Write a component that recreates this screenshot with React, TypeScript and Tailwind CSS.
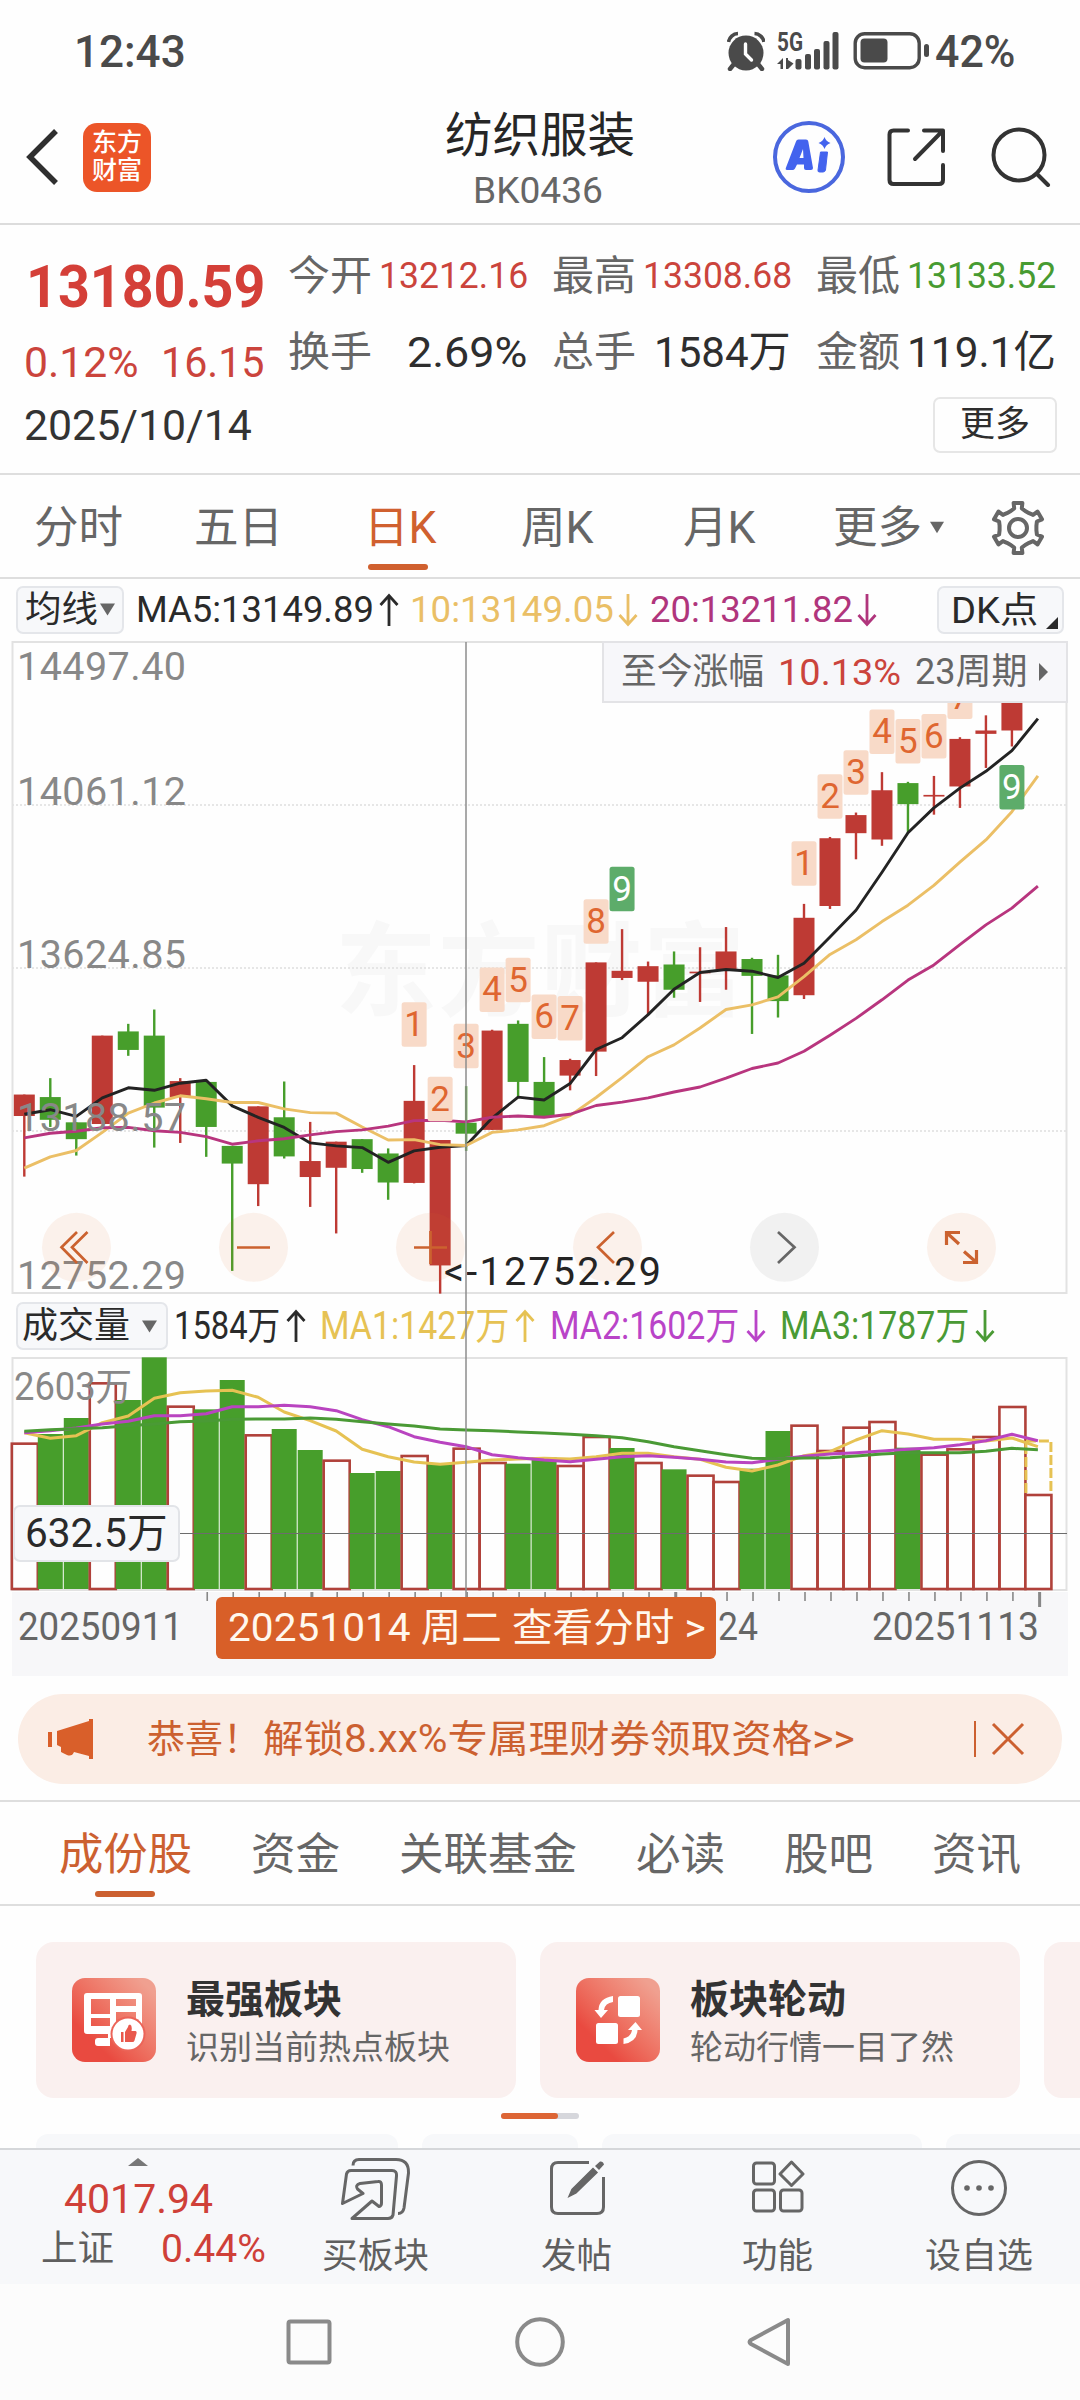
import React, { useLayoutEffect, useRef, useState } from "react";

/* Text squeezed or stretched horizontally to fill the width given by its class. */
function Fit({ className = "", children }: { className?: string; children: React.ReactNode }) {
  const outer = useRef<HTMLSpanElement>(null);
  const inner = useRef<HTMLSpanElement>(null);
  const [k, setK] = useState(1);
  useLayoutEffect(() => {
    if (outer.current && inner.current && inner.current.offsetWidth > 0) {
      setK(outer.current.clientWidth / inner.current.offsetWidth);
    }
  }, []);
  return (
    <span ref={outer} className={"block shrink-0 whitespace-nowrap leading-none " + className}>
      <span ref={inner} className="inline-block origin-left" style={{ transform: `scaleX(${k})` }}>
        {children}
      </span>
    </span>
  );
}

function Down({ className = "" }: { className?: string }) {
  return (
    <svg viewBox="0 0 16 13" className={"shrink-0 " + className}>
      <polygon points="0,0 16,0 8,13" fill="#666" />
    </svg>
  );
}

function Arrow({ up = false, className = "" }: { up?: boolean; className?: string }) {
  return (
    <svg viewBox="0 0 20 34" className={"h-[34px] w-[20px] shrink-0 " + className} fill="none" stroke="currentColor" strokeWidth="2.8">
      {up ? <path d="M10 33V3M1.5 12L10 2.5L18.5 12" /> : <path d="M10 1V31M1.5 22L10 31.5L18.5 22" />}
    </svg>
  );
}

/* ---------- status bar and header ---------- */

function StatusBar() {
  return (
    <div className="flex h-[102px] items-center text-[#4a4a4a]">
      <Fit className="ml-[74px] mt-[1px] w-[112px] text-[44px] font-medium">12:43</Fit>
      <svg viewBox="0 0 38 40" className="ml-[541px] h-[40px] w-[38px] shrink-0">
        <circle cx="19" cy="22" r="17.5" fill="#4a4a4a" />
        <path d="M1.5 11A10 10 0 0 1 11 2.5M37 11A10 10 0 0 0 27.500 2.5" stroke="#4a4a4a" strokeWidth="3.6" fill="none" />
        <path d="M7 33L3 38M31 33L35 38" stroke="#4a4a4a" strokeWidth="4.500" strokeLinecap="round" />
        <path d="M18.500 13V23L24.500 29" stroke="#fff" strokeWidth="3.4" fill="none" strokeLinecap="round" />
      </svg>
      <svg viewBox="0 0 64 40" className="ml-[12px] h-[40px] w-[64px] shrink-0 overflow-visible" fill="#4a4a4a">
        <text x="0" y="19.500" fontSize="25" fontWeight="700" textLength="26" lengthAdjust="spacingAndGlyphs">5G</text>
        <path d="M0 33L6 27V38H3.500V33ZM9 27H11V29L16.500 32.500L11 38H9Z" />
        <rect x="18.500" y="28" width="6" height="10.500" rx="2" />
        <rect x="28" y="23" width="6" height="15.500" rx="2" />
        <rect x="37" y="18" width="6" height="20.500" rx="2" />
        <rect x="46.500" y="10" width="6" height="28.500" rx="2" />
        <rect x="55.500" y="1" width="6" height="37.500" rx="2" />
      </svg>
      <svg viewBox="0 0 77 40" className="ml-[12px] h-[40px] w-[77px] shrink-0">
        <rect x="2.200" y="2.700" width="64" height="34" rx="9.500" fill="none" stroke="#4a4a4a" strokeWidth="3.400" />
        <rect x="7.500" y="7.500" width="27" height="24" rx="4" fill="#4a4a4a" />
        <rect x="71" y="13" width="5" height="13" rx="2.500" fill="#4a4a4a" />
      </svg>
      <Fit className="ml-[5px] mt-[1px] w-[80px] text-[44px] font-medium">42%</Fit>
    </div>
  );
}

function Header() {
  return (
    <div className="flex h-[123px] border-b-2 border-[#dcdcdc]">
      <div className="flex h-[110px] items-center">
        <svg viewBox="0 0 36 60" className="ml-[24px] h-[60px] w-[36px]" fill="none" stroke="#2f2f2f" strokeWidth="5.5">
          <path d="M32 4L6 30L32 56" />
        </svg>
        <div className="ml-[23px] flex h-[69px] w-[68px] flex-col items-center justify-center rounded-[14px] bg-[#ec5528] text-[25px] font-medium leading-[28px] text-white">
          <span>东方</span>
          <span>财富</span>
        </div>
      </div>
      <div className="ml-[289px] flex w-[200px] flex-col items-center pt-[10px]">
        <Fit className="w-[190px] text-[48px] text-[#262626]">纺织服装</Fit>
        <Fit className="mr-[5px] mt-[13px] w-[130px] text-[36px] text-[#666]">BK0436</Fit>
      </div>
      <div className="ml-[132px] flex h-[110px] items-center">
        <svg viewBox="0 0 74 74" className="h-[74px] w-[74px]">
          <circle cx="37" cy="37" r="34" fill="none" stroke="#4a67de" strokeWidth="4" />
          <path fillRule="evenodd" d="M24 21.500Q24.500 19.500 26.500 19.500H34Q36 19.500 36.300 21.500L41 48Q41 50 39 50H34Q32 50 32 48V44.500H25L23 48.500Q22 50 20.500 50H15Q13 50 14 47.500ZM27.500 38H31.500L31 29Z" fill="#4363ee" />
          <path d="M48.500 32H55.500L53.500 50Q53 52 51 52H47.500Q45.500 52 46 50Z" fill="#4363ee" stroke="#4363ee" strokeLinejoin="round" />
          <path d="M52.500 17Q54 21.500 58.500 23Q54 24.500 52.500 29Q51 24.500 46.500 23Q51 21.500 52.500 17Z" fill="#4363ee" />
        </svg>
        <svg viewBox="0 0 60 60" className="ml-[40px] h-[60px] w-[60px]" fill="none" stroke="#333" strokeWidth="4" strokeLinecap="round" strokeLinejoin="round">
          <path d="M22 3.500H7.500Q3.500 3.500 3.500 7.500V53Q3.500 57 7.500 57H53Q57 57 57 53V38" />
          <path d="M38 3.500H57V24M56 4.500L29 32" />
        </svg>
        <svg viewBox="0 0 60 60" className="ml-[45px] h-[60px] w-[60px]" fill="none" stroke="#333" strokeWidth="4" strokeLinecap="round">
          <circle cx="28" cy="28" r="25.500" />
          <path d="M46 47L57 58" />
        </svg>
      </div>
    </div>
  );
}

/* ---------- quote summary ---------- */

function Quote() {
  return (
    <div className="h-[248px]">
      <div className="flex h-[152px]">
        <div className="flex flex-col">
          <div className="flex h-[121px] items-center">
            <Fit className="ml-[26px] mt-[2px] w-[239px] text-[60px] font-bold text-[#d43f38]">13180.59</Fit>
          </div>
          <div className="flex h-[31px] items-center text-[42px] text-[#cb443c]">
            <Fit className="ml-[24px] mt-[2px] w-[115px]">0.12%</Fit>
            <Fit className="ml-[22px] mt-[2px] w-[104px]">16.15</Fit>
          </div>
        </div>
        <div className="flex flex-col text-[41px] text-[#666]">
          <div className="flex h-[102px] items-center">
            <Fit className="ml-[23px] w-[84px]">今开</Fit>
            <Fit className="ml-[7px] w-[149px] text-[36px] text-[#cb443c]">13212.16</Fit>
            <Fit className="ml-[24px] w-[84px]">最高</Fit>
            <Fit className="ml-[7px] w-[149px] text-[36px] text-[#cb443c]">13308.68</Fit>
            <Fit className="ml-[24px] w-[84px]">最低</Fit>
            <Fit className="ml-[7px] w-[149px] text-[36px] text-[#479b31]">13133.52</Fit>
          </div>
          <div className="flex h-[50px] items-center">
            <Fit className="ml-[23px] w-[84px]">换手</Fit>
            <Fit className="ml-[35px] w-[120px] text-[43px] text-[#2e2e2e]">2.69%</Fit>
            <Fit className="ml-[25px] w-[84px]">总手</Fit>
            <Fit className="ml-[18px] w-[137px] text-[43px] text-[#2e2e2e]">1584万</Fit>
            <Fit className="ml-[25px] w-[84px]">金额</Fit>
            <Fit className="ml-[7px] w-[149px] text-[43px] text-[#2e2e2e]">119.1亿</Fit>
          </div>
        </div>
      </div>
      <div className="flex h-[96px] items-center justify-between pl-[24px] pr-[23px]">
        <Fit className="mt-[1px] w-[228px] text-[43px] text-[#333]">2025/10/14</Fit>
        <div className="flex h-[56px] w-[124px] items-center justify-center rounded-[7px] border-2 border-[#e6e6e6] text-[35px] text-[#2e2e2e]">更多</div>
      </div>
    </div>
  );
}

/* ---------- period tabs ---------- */

const gearPoints = Array.from({ length: 6 })
  .flatMap((_, k) =>
    [
      [-23, 18.500],
      [-11, 20],
      [-10, 25.500],
      [10, 25.500],
      [11, 20],
      [23, 18.500],
    ].map(([da, r]) => {
      const a = ((-90 + 60 * k + da) * Math.PI) / 180;
      return `${(28 + r * Math.cos(a)).toFixed(1)},${(28 + r * Math.sin(a)).toFixed(1)}`;
    }),
  )
  .join(" ");

function PeriodTabs() {
  return (
    <div className="flex h-[106px] items-center border-y-2 border-[#dedede] pt-[3px] text-[44px] text-[#666]">
      <Fit className="ml-[34px] w-[89px]">分时</Fit>
      <Fit className="ml-[71px] w-[89px]">五日</Fit>
      <div className="relative ml-[81px] text-[#d0602f]">
        <Fit className="w-[73px]">日K</Fit>
        <div className="absolute left-[4px] top-[58px] h-[6px] w-[60px] rounded-full bg-[#d0602f]" />
      </div>
      <Fit className="ml-[84px] w-[73px]">周K</Fit>
      <Fit className="ml-[89px] w-[73px]">月K</Fit>
      <Fit className="ml-[77px] w-[89px]">更多</Fit>
      <Down className="ml-[8px] h-[13px] w-[14px]" />
      <svg viewBox="0 0 56 56" className="ml-[46px] h-[56px] w-[56px]" fill="none" stroke="#666" strokeWidth="4" strokeLinejoin="round">
        <polygon points={gearPoints} />
        <circle cx="28" cy="28" r="9" />
      </svg>
    </div>
  );
}

function AverageRow() {
  return (
    <div className="flex h-[61px] items-center text-[37px]">
      <div className="ml-[16px] flex h-[48px] w-[108px] items-center rounded-[7px] border-2 border-[#e4e6ea] bg-[#f7f8fa] text-[#2a2a2a]">
        <Fit className="ml-[7px] w-[73px] text-[36px]">均线</Fit>
        <Down className="ml-[2px] h-[13px] w-[15px]" />
      </div>
      <Fit className="ml-[12px] w-[238px] text-[#2a2a2a]">MA5:13149.89</Fit>
      <Arrow up className="ml-[5px] text-[#2a2a2a]" />
      <Fit className="ml-[11px] w-[204px] text-[#eabf66]">10:13149.05</Fit>
      <Arrow className="ml-[4px] text-[#eabf66]" />
      <Fit className="ml-[12px] w-[203px] text-[#b0357c]">20:13211.82</Fit>
      <Arrow className="ml-[4px] text-[#b0357c]" />
      <div className="ml-[60px] flex h-[48px] w-[127px] items-end rounded-[7px] border-2 border-[#e4e6ea] bg-[#f7f8fa] pb-[3px] text-[#2a2a2a]">
        <Fit className="ml-[12px] w-[87px] text-[36px]">DK点</Fit>
        <svg viewBox="0 0 12 12" className="ml-[8px] h-[12px] w-[12px]">
          <polygon points="12,0 12,12 0,12" fill="#2a2a2a" />
        </svg>
      </div>
    </div>
  );
}

/* ---------- candlestick chart ---------- */

const X0 = 24.3;
const STEP = 25.99;
const cx = (i: number) => X0 + STEP * i;
const py = (v: number) => v / 2.376;
const RED = "#be3a34";
const GREEN = "#479e2b";

/* [up, high, body top, body bottom, low] */
const candles: [number, number, number, number, number][] = [
  [1, 1080, 1080, 1131, 1275], [0, 1041, 1086, 1140, 1157], [0, 1146, 1146, 1186, 1225], [1, 940, 940, 1150, 1150],
  [0, 912, 930, 974, 988], [0, 878, 940, 1111, 1206], [1, 1041, 1048, 1086, 1195], [0, 1050, 1050, 1157, 1228],
  [0, 1202, 1202, 1244, 1499], [1, 1108, 1108, 1293, 1345], [0, 1049, 1134, 1227, 1232], [1, 1145, 1238, 1276, 1347],
  [1, 1192, 1192, 1254, 1410], [0, 1186, 1186, 1257, 1266], [0, 1208, 1220, 1289, 1330], [1, 1010, 1095, 1290, 1291],
  [1, 1188, 1188, 1486, 1553], [0, 1060, 1147, 1173, 1214], [1, 926, 928, 1164, 1164], [0, 904, 912, 1050, 1086],
  [0, 991, 1050, 1132, 1132], [1, 995, 998, 1035, 1070], [1, 766, 766, 978, 1036], [1, 687, 786, 803, 808],
  [1, 764, 775, 812, 889], [0, 740, 771, 831, 850], [1, 730, 788, 792, 860], [1, 682, 740, 783, 831],
  [0, 755, 758, 798, 936], [0, 748, 797, 858, 897], [1, 627, 660, 844, 853], [1, 468, 471, 632, 639],
  [1, 410, 416, 459, 521], [1, 314, 357, 474, 489], [0, 337, 340, 390, 458], [1, 323, 368, 372, 415],
  [1, 231, 235, 348, 399], [1, 179, 215, 223, 304], [1, 100, 120, 215, 253],
];

const ma5 = [1127, 1116, 1132, 1088, 1064, 1070, 1053, 1046, 1107, 1134, 1158, 1195, 1202, 1206, 1241, 1214, 1205, 1201, 1136, 1086, 1093, 1054, 973, 945, 890, 830, 790, 783, 787, 802, 768, 706, 642, 552, 458, 399, 352, 312, 263, 187];
const ma10 = [1255, 1228, 1213, 1170, 1124, 1100, 1083, 1090, 1099, 1099, 1114, 1123, 1124, 1157, 1188, 1187, 1199, 1201, 1170, 1164, 1154, 1130, 1087, 1040, 990, 962, 922, 878, 867, 848, 800, 747, 712, 669, 630, 583, 528, 475, 408, 323];
const ma20 = [1183, 1172, 1167, 1159, 1158, 1166, 1170, 1180, 1198, 1190, 1185, 1176, 1168, 1164, 1155, 1142, 1141, 1145, 1134, 1131, 1134, 1127, 1106, 1098, 1088, 1074, 1062, 1041, 1018, 1005, 977, 939, 899, 855, 808, 772, 724, 677, 637, 585];

const marks: [number, string, number][] = [
  [15, "1", 861], [16, "2", 1038], [17, "3", 912], [18, "4", 778], [19, "5", 755], [20, "6", 842], [21, "7", 846], [22, "8", 616],
  [23, "9", 539], [30, "1", 478], [31, "2", 319], [32, "3", 262], [33, "4", 165], [34, "5", 188], [35, "6", 176], [36, "7", 82], [38, "9", 297],
];

const line = (values: number[], f: (v: number) => number) => values.map((v, i) => `${cx(i).toFixed(1)},${f(v).toFixed(1)}`).join(" ");

const priceLabels: [string, number][] = [["14497.40", 39.500], ["14061.12", 164.500], ["13624.85", 327.500], ["13188.57", 490.500], ["12752.29", 649]];

function CandleChart() {
  return (
    <div className="relative h-[655px]">
      <svg viewBox="0 0 1080 655" className="block h-[655px] w-[1080px]">
        <text x="335" y="368" fontSize="102" fontWeight="700" fill="#f8f8f8" textLength="410">东方财富</text>
        {[165, 328, 491].map((y) => (
          <line key={y} x1="12" x2="1067" y1={y} y2={y} stroke="#dedede" strokeWidth="1.500" strokeDasharray="2 2" />
        ))}
        <rect x="12.500" y="2" width="1054" height="651" fill="none" stroke="#e2e2e2" strokeWidth="2" />
        {candles.map(([up, h, t, b, l], i) => (
          <g key={i} fill={up ? RED : GREEN}>
            <rect x={cx(i) - 1.200} y={py(h)} width="2.400" height={py(l - h)} />
            <rect x={cx(i) - 10.500} y={py(t)} width="21" height={py(b - t)} />
          </g>
        ))}
        <g fill="none" strokeWidth="2.900" strokeLinejoin="round">
          <polyline points={line(ma5, py)} stroke="#232323" />
          <polyline points={line(ma10, py)} stroke="#ebbf66" />
          <polyline points={line(ma20, py)} stroke="#b8357e" />
        </g>
        {marks.map(([i, n, y]) => (
          <g key={i}>
            <rect x={cx(i) - 12.500} y={py(y)} width="25" height="44.500" rx="2.500" fill={n === "9" ? "#5dac6a" : "#f8dac8"} />
            <text x={cx(i)} y={py(y) + 34} fontSize="35" textAnchor="middle" fill={n === "9" ? "#fff" : "#df6630"}>{n}</text>
          </g>
        ))}
        {priceLabels.map(([s, y]) => (
          <text key={s} x="17" y={y} fontSize="39.500" fill="#888" textLength="169">{s}</text>
        ))}
        {[76.5, 253.5, 430.5, 607.5, 784.5, 961.5].map((x) => (
          <circle key={x} cx={x} cy="607.300" r="34.500" fill={x === 784.5 ? "#444" : "#e06a28"} fillOpacity={x === 784.5 ? 0.07 : 0.09} />
        ))}
        <g fill="none" stroke="#cb622f" strokeWidth="2.700">
          <path d="M77 592L61.500 607.300L77 623M87.500 592L72 607.300L87.500 623" />
          <path d="M237 607.500H270M414 607.500H447M430.500 591V624" />
          <path d="M614 592L598 607.300L614 623" />
          <path d="M778 592L794.500 607.300L778 623" stroke="#666" />
          <path d="M946.500 605V592.500H960M947 593L959 604M976.500 610V622.500H963M976 622L964 611.500" strokeWidth="3.200" />
        </g>
        <text x="444" y="645" fontSize="39.500" fill="#242424" textLength="217">&lt;-12752.29</text>
      </svg>
      <div className="absolute left-[602px] top-[1px] flex h-[62px] w-[466px] items-center border-2 border-[#e3e3e6] bg-[#f7f7fa] text-[36px] text-[#666]">
        <Fit className="ml-[17px] w-[143px]">至今涨幅</Fit>
        <Fit className="ml-[14px] w-[123px] text-[37px] text-[#cb443c]">10.13%</Fit>
        <Fit className="ml-[14px] w-[112px]">23周期</Fit>
        <svg viewBox="0 0 9 18" className="ml-[12px] h-[18px] w-[9px]">
          <polygon points="0,0 9,9 0,18" fill="#666" />
        </svg>
      </div>
    </div>
  );
}

/* ---------- volume chart ---------- */

function VolumeHead() {
  return (
    <div className="flex h-[62px] items-center text-[38px]">
      <div className="ml-[16px] flex h-[48px] w-[152px] items-center rounded-[7px] border-2 border-[#e4e6ea] bg-[#f7f8fa] text-[#2a2a2a]">
        <Fit className="ml-[4px] w-[108px] text-[36px]">成交量</Fit>
        <Down className="ml-[12px] h-[13px] w-[15px]" />
      </div>
      <Fit className="ml-[6px] w-[106px] text-[#2a2a2a]">1584万</Fit>
      <Arrow up className="ml-[6px] text-[#2a2a2a]" />
      <Fit className="ml-[14px] w-[189px] text-[#e6c253]">MA1:1427万</Fit>
      <Arrow up className="ml-[6px] text-[#e6c253]" />
      <Fit className="ml-[15px] w-[189px] text-[#b944c8]">MA2:1602万</Fit>
      <Arrow className="ml-[7px] text-[#b944c8]" />
      <Fit className="ml-[14px] w-[189px] text-[#4a9a35]">MA3:1787万</Fit>
      <Arrow className="ml-[6px] text-[#4a9a35]" />
    </div>
  );
}

const vy = (v: number) => v / 3 - 67;

/* [up, top] */
const volumes: [number, number][] = [
  [1, 458], [0, 432], [0, 384], [1, 277], [0, 330], [0, 202], [1, 347], [0, 358], [0, 270], [1, 433],
  [0, 417], [0, 480], [1, 509], [0, 549], [0, 543], [1, 495], [0, 522], [1, 473], [1, 516], [0, 521],
  [0, 502], [1, 525], [1, 438], [0, 474], [1, 516], [0, 538], [1, 554], [1, 573], [0, 536], [0, 423],
  [1, 404], [1, 480], [1, 410], [1, 393], [0, 473], [1, 491], [1, 475], [1, 438], [1, 348], [1, 612],
];
const vma1 = [428, 445, 437, 398, 378, 325, 308, 303, 301, 322, 366, 392, 423, 478, 500, 516, 523, 517, 510, 507, 505, 507, 500, 490, 490, 500, 508, 532, 543, 525, 497, 485, 450, 422, 432, 448, 448, 453, 444, 470];
const vma2 = [428, 422, 414, 402, 394, 377, 377, 371, 350, 350, 346, 350, 362, 389, 410, 440, 457, 470, 494, 503, 510, 515, 508, 500, 497, 502, 508, 516, 518, 508, 499, 492, 488, 483, 478, 473, 464, 452, 433, 452];
const vma3 = [424, 419, 416, 413, 407, 402, 395, 393, 388, 387, 387, 384, 388, 395, 402, 408, 417, 420, 422, 426, 429, 433, 437, 443, 455, 470, 482, 494, 505, 506, 504, 503, 498, 492, 488, 488, 488, 484, 475, 479];

function VolumeChart() {
  return (
    <div className="relative h-[319px]">
      <svg viewBox="0 0 1080 319" className="block h-[319px] w-[1080px]">
        <rect x="12.500" y="1" width="1054" height="232" fill="none" stroke="#e2e2e2" strokeWidth="2" />
        <rect x="12" y="235" width="1056" height="84" fill="#f7f7f9" />
        {volumes.map(([up, v], i) =>
          up ? (
            <rect key={i} x={cx(i) - 12.500} y={vy(v) + 1} width="26" height={231 - vy(v)} fill={i === 39 ? "#fff" : "none"} stroke="#b0413a" strokeWidth="2.600" />
          ) : (
            <rect key={i} x={cx(i) - 12.500} y={vy(v)} width="25" height={232 - vy(v)} fill={GREEN} />
          ),
        )}
        <path d={`M${cx(39) - 12} 136V84H${cx(39) + 13}V136`} fill="none" stroke="#e6c253" strokeWidth="3" strokeDasharray="10 3" />
        <g fill="none" strokeWidth="3" strokeLinejoin="round">
          <polyline points={line(vma1, vy)} stroke="#e6c253" />
          <polyline points={line(vma2, vy)} stroke="#b944c0" />
          <polyline points={line(vma3, vy)} stroke="#4a9a35" />
        </g>
        <text x="14" y="43" fontSize="38" fill="#888" textLength="118" lengthAdjust="spacingAndGlyphs">2603万</text>
        <line x1="13" x2="1067" y1="176.500" y2="176.500" stroke="#6c6c6c" strokeWidth="1.200" />
        {Array.from({ length: 33 }).map((_, k) => {
          const i = k + 7;
          const thick = i === 11 || i === 25 || i === 39;
          return <rect key={i} x={cx(i) + 0.2} y="235" width={thick ? 3 : 1.6} height={i === 39 ? 15 : 9} fill="#888" />;
        })}
        <g fontSize="38" fill="#666">
          <text x="18" y="283" textLength="165" lengthAdjust="spacingAndGlyphs">20250911</text>
          <text x="718" y="283" textLength="40" lengthAdjust="spacingAndGlyphs">24</text>
          <text x="872" y="283" textLength="167" lengthAdjust="spacingAndGlyphs">20251113</text>
        </g>
      </svg>
      <div className="absolute left-[13px] top-[148px] flex h-[57px] w-[167px] items-center rounded-[7px] border-2 border-[#e2e4e8] bg-[#f7f8fa] text-[40px] text-[#2a2a2a]">
        <Fit className="ml-[10px] w-[142px]">632.5万</Fit>
      </div>
    </div>
  );
}

function ChartArea() {
  return (
    <div className="relative">
      <CandleChart />
      <VolumeHead />
      <VolumeChart />
      <div className="absolute left-[465px] top-[2px] h-[960px] w-[2px] bg-[#8c8c8c]/75" />
      <div className="absolute left-[216px] top-[957px] flex h-[62px] w-[500px] items-center rounded-[6px] bg-[#d85f28] text-[39px] text-[#fff8ee]">
        <Fit className="ml-[12px] w-[478px]">20251014 周二 查看分时 &gt;</Fit>
      </div>
    </div>
  );
}

/* ---------- promo and sections ---------- */

function Promo() {
  return (
    <div className="mx-[18px] mt-[18px] flex h-[90px] items-center rounded-full bg-[#fbede5] text-[#cc6030]">
      <svg viewBox="0 0 46 40" className="ml-[29px] h-[40px] w-[46px]" fill="#d95f2a">
        <rect x="1" y="13" width="4" height="15" />
        <path d="M10 12L42 2V0H46V40H42V37L27 33Q25 38 20 36L14 33V28L10 26Z" />
      </svg>
      <div className="ml-[54px] flex text-[38px]">
        <Fit className="w-[114px]">恭喜！</Fit>
        <Fit className="ml-[2px] w-[592px]">解锁8.xx%专属理财券领取资格&gt;&gt;</Fit>
      </div>
      <div className="ml-[119px] h-[36px] w-[2px] bg-[#cc6030]" />
      <svg viewBox="0 0 34 34" className="ml-[15px] h-[34px] w-[34px]" fill="none" stroke="#cc6030" strokeWidth="3">
        <path d="M2 2L32 32M32 2L2 32" />
      </svg>
    </div>
  );
}

function SectionTabs() {
  return (
    <div className="mt-[16px] flex h-[106px] items-center border-y-2 border-[#dedede] pt-[4px] text-[44px] text-[#666]">
      <div className="relative ml-[59px] text-[#cc6030]">
        <Fit className="w-[133px]">成份股</Fit>
        <div className="absolute left-[36px] top-[58px] h-[6px] w-[60px] rounded-full bg-[#cc6030]" />
      </div>
      <Fit className="ml-[59px] w-[89px]">资金</Fit>
      <Fit className="ml-[59px] w-[178px]">关联基金</Fit>
      <Fit className="ml-[59px] w-[89px]">必读</Fit>
      <Fit className="ml-[59px] w-[89px]">股吧</Fit>
      <Fit className="ml-[59px] w-[89px]">资讯</Fit>
    </div>
  );
}

function Card({ title, sub, children }: { title: string; sub: string; children: React.ReactNode }) {
  return (
    <div className="flex h-[156px] w-[480px] shrink-0 items-center rounded-[18px] bg-[#faf0ef]">
      <div className="ml-[36px] flex h-[84px] w-[84px] items-center justify-center rounded-[13px] bg-linear-to-tr from-[#e94a40] from-25% to-[#f0a090] to-90%">
        {children}
      </div>
      <div className="ml-[30px] pt-[4px]">
        <Fit className="w-[156px] text-[39px] font-bold text-[#333]">{title}</Fit>
        <Fit className="mt-[11px] w-[264px] text-[33px] text-[#666]">{sub}</Fit>
      </div>
    </div>
  );
}

function Cards() {
  return (
    <div className="h-[242px] overflow-hidden pt-[36px]">
      <div className="flex gap-[24px] pl-[36px]">
        <Card title="最强板块" sub="识别当前热点板块">
          <svg viewBox="0 0 84 84" className="h-[84px] w-[84px]">
            <path fillRule="evenodd" fill="#fff" d="M15 15H67Q70 15 70 18V52H40V60H38V68H26Q23 68 23 65V63Q23 60 26 60H36V56H15Q12 56 12 53V18Q12 15 15 15ZM19 21V36H38V21ZM44 21V28H64V21ZM19 40V48H38V40ZM44 34V48H64V34Z" />
            <circle cx="56" cy="56" r="17.500" fill="#ec6458" />
            <circle cx="56" cy="56" r="15.500" fill="#fff" />
            <path d="M49 54H51.500V64H49ZM53 54L56 49Q56 46.500 58 46.500Q60.500 47.500 59.500 53H63.500Q65 53.500 64.500 55.500L62.500 62.500Q62 64 60.500 64H53Z" fill="#e9584c" />
          </svg>
        </Card>
        <Card title="板块轮动" sub="轮动行情一目了然">
          <svg viewBox="0 0 84 84" className="h-[84px] w-[84px]" fill="#fff">
            <rect x="42" y="18" width="22" height="21" rx="2.500" />
            <rect x="20" y="45" width="22" height="21" rx="2.500" />
            <path d="M37 18V24Q29 25 28 32H32L25 40L18.500 32H22.500Q23 20 37 18Z" />
            <path d="M47.500 66V60.500Q55 59 56 52H52L59.500 44L66 52H61.500Q61 64 47.500 66Z" />
          </svg>
        </Card>
        <div className="h-[156px] w-[480px] shrink-0 rounded-[18px] bg-[#faf0ef]" />
      </div>
      <div className="mx-auto mt-[15px] h-[6px] w-[78px] rounded-full bg-[#d6d7dc]">
        <div className="h-[6px] w-[57px] rounded-full bg-[#dd6535]" />
      </div>
      <div className="mt-[15px] flex gap-[24px] pl-[36px]">
        <div className="h-[60px] w-[362px] shrink-0 rounded-[12px] bg-[#f7f8fa]" />
        <div className="h-[60px] w-[156px] shrink-0 rounded-[12px] bg-[#f7f8fa]" />
        <div className="h-[60px] w-[320px] shrink-0 rounded-[12px] bg-[#f7f8fa]" />
        <div className="h-[60px] w-[200px] shrink-0 rounded-[12px] bg-[#f7f8fa]" />
      </div>
    </div>
  );
}

/* ---------- bottom bars ---------- */

function ActionItem({ label, children }: { label: React.ReactNode; children: React.ReactNode }) {
  return (
    <div className="flex w-[201px] flex-col items-center pt-[8px]">
      <div className="h-[62px]">{children}</div>
      <div className="mt-[19px] text-[35px]">{label}</div>
    </div>
  );
}

function BottomBar() {
  return (
    <div className="flex h-[136px] border-t-2 border-[#d5d7da] bg-[#f7f8fa] text-[#5f5f5f]">
      <div className="flex w-[275px] flex-col items-center">
        <svg viewBox="0 0 20 8" className="mt-[8px] h-[8px] w-[20px]">
          <polygon points="0,8 10,0 20,8" fill="#777" />
        </svg>
        <Fit className="ml-[2px] mt-[13px] w-[149px] text-[41px] text-[#cf4038]">4017.94</Fit>
        <div className="mt-[10px] flex w-[275px] items-center">
          <Fit className="ml-[41px] w-[73px] text-[36px]">上证</Fit>
          <Fit className="ml-[47px] w-[105px] text-[38px] text-[#cf4038]">0.44%</Fit>
        </div>
      </div>
      <ActionItem label={<Fit className="w-[107px]">买板块</Fit>}>
        <svg viewBox="0 0 70 64" className="h-[64px] w-[70px]" fill="none" stroke="#666" strokeWidth="3" strokeLinejoin="round">
          <path d="M12 7.500Q12 1.500 18 1.500H55Q68 1.500 67.500 15L63 50Q62 55.500 57 55.500" />
          <path d="M1.500 45.500L5.500 16Q6.500 12.500 10 12.500H51Q56 12.500 55.500 18L52 57Q51 60.500 47 60.500H11L31 43L38 48.500Q40.500 48 40.500 45V27Q40.500 23 37 23.500L19 25.500Q14 27 16.500 31L22 35.500Z" />
        </svg>
      </ActionItem>
      <ActionItem label={<Fit className="w-[71px]">发帖</Fit>}>
        <svg viewBox="0 0 60 62" className="h-[62px] w-[60px]">
          <path d="M42 4.500H11Q4.500 4.500 4.500 11V49Q4.500 55.500 11 55.500H50Q56.500 55.500 56.500 49V19" fill="none" stroke="#666" strokeWidth="3" />
          <path d="M46 10.500L50 14.500L29 35L22 38.500L25 31.500Z" fill="#666" stroke="#666" strokeWidth="1.500" />
          <path d="M48 8L53 3.500Q56 3 57 6.500L52 12Z" fill="#666" />
        </svg>
      </ActionItem>
      <ActionItem label={<Fit className="w-[71px]">功能</Fit>}>
        <svg viewBox="0 0 54 62" className="h-[62px] w-[54px]" fill="none" stroke="#666" strokeWidth="3" strokeLinejoin="round">
          <rect x="2.500" y="5" width="21" height="21" rx="3" />
          <rect x="2.500" y="32" width="21" height="21" rx="3" />
          <rect x="29.500" y="32" width="21.500" height="21" rx="3" />
          <path d="M40.500 4L52 16L40.500 27.500L29 16Z" />
        </svg>
      </ActionItem>
      <ActionItem label={<Fit className="w-[108px]">设自选</Fit>}>
        <svg viewBox="0 0 60 62" className="h-[62px] w-[60px]">
          <circle cx="30" cy="30" r="26.500" fill="none" stroke="#666" strokeWidth="3" />
          <circle cx="18" cy="30" r="2.800" fill="#666" />
          <circle cx="30" cy="30" r="2.800" fill="#666" />
          <circle cx="42" cy="30" r="2.800" fill="#666" />
        </svg>
      </ActionItem>
    </div>
  );
}

function SystemNav() {
  return (
    <div className="flex h-[116px] items-center bg-[#fcfcfc]">
      <svg viewBox="0 0 50 50" className="ml-[284px] h-[50px] w-[50px]" fill="none" stroke="#8a8a8a" strokeWidth="4">
        <rect x="4.500" y="4.500" width="41" height="41" rx="2" />
      </svg>
      <svg viewBox="0 0 50 50" className="ml-[181px] h-[50px] w-[50px]" fill="none" stroke="#8a8a8a" strokeWidth="4">
        <circle cx="25" cy="25" r="22.800" />
      </svg>
      <svg viewBox="0 0 50 50" className="ml-[179px] h-[50px] w-[50px]" fill="none" stroke="#8a8a8a" strokeWidth="4" strokeLinejoin="round">
        <path d="M44 3V47L7 27Q4 25 7 23Z" />
      </svg>
    </div>
  );
}

export default function App() {
  return (
    <div className="h-[2400px] w-[1080px] overflow-hidden bg-[#fefefe] font-['Roboto','Noto_Sans_CJK_SC',sans-serif]">
      <StatusBar />
      <Header />
      <Quote />
      <PeriodTabs />
      <AverageRow />
      <ChartArea />
      <Promo />
      <SectionTabs />
      <Cards />
      <BottomBar />
      <SystemNav />
    </div>
  );
}
